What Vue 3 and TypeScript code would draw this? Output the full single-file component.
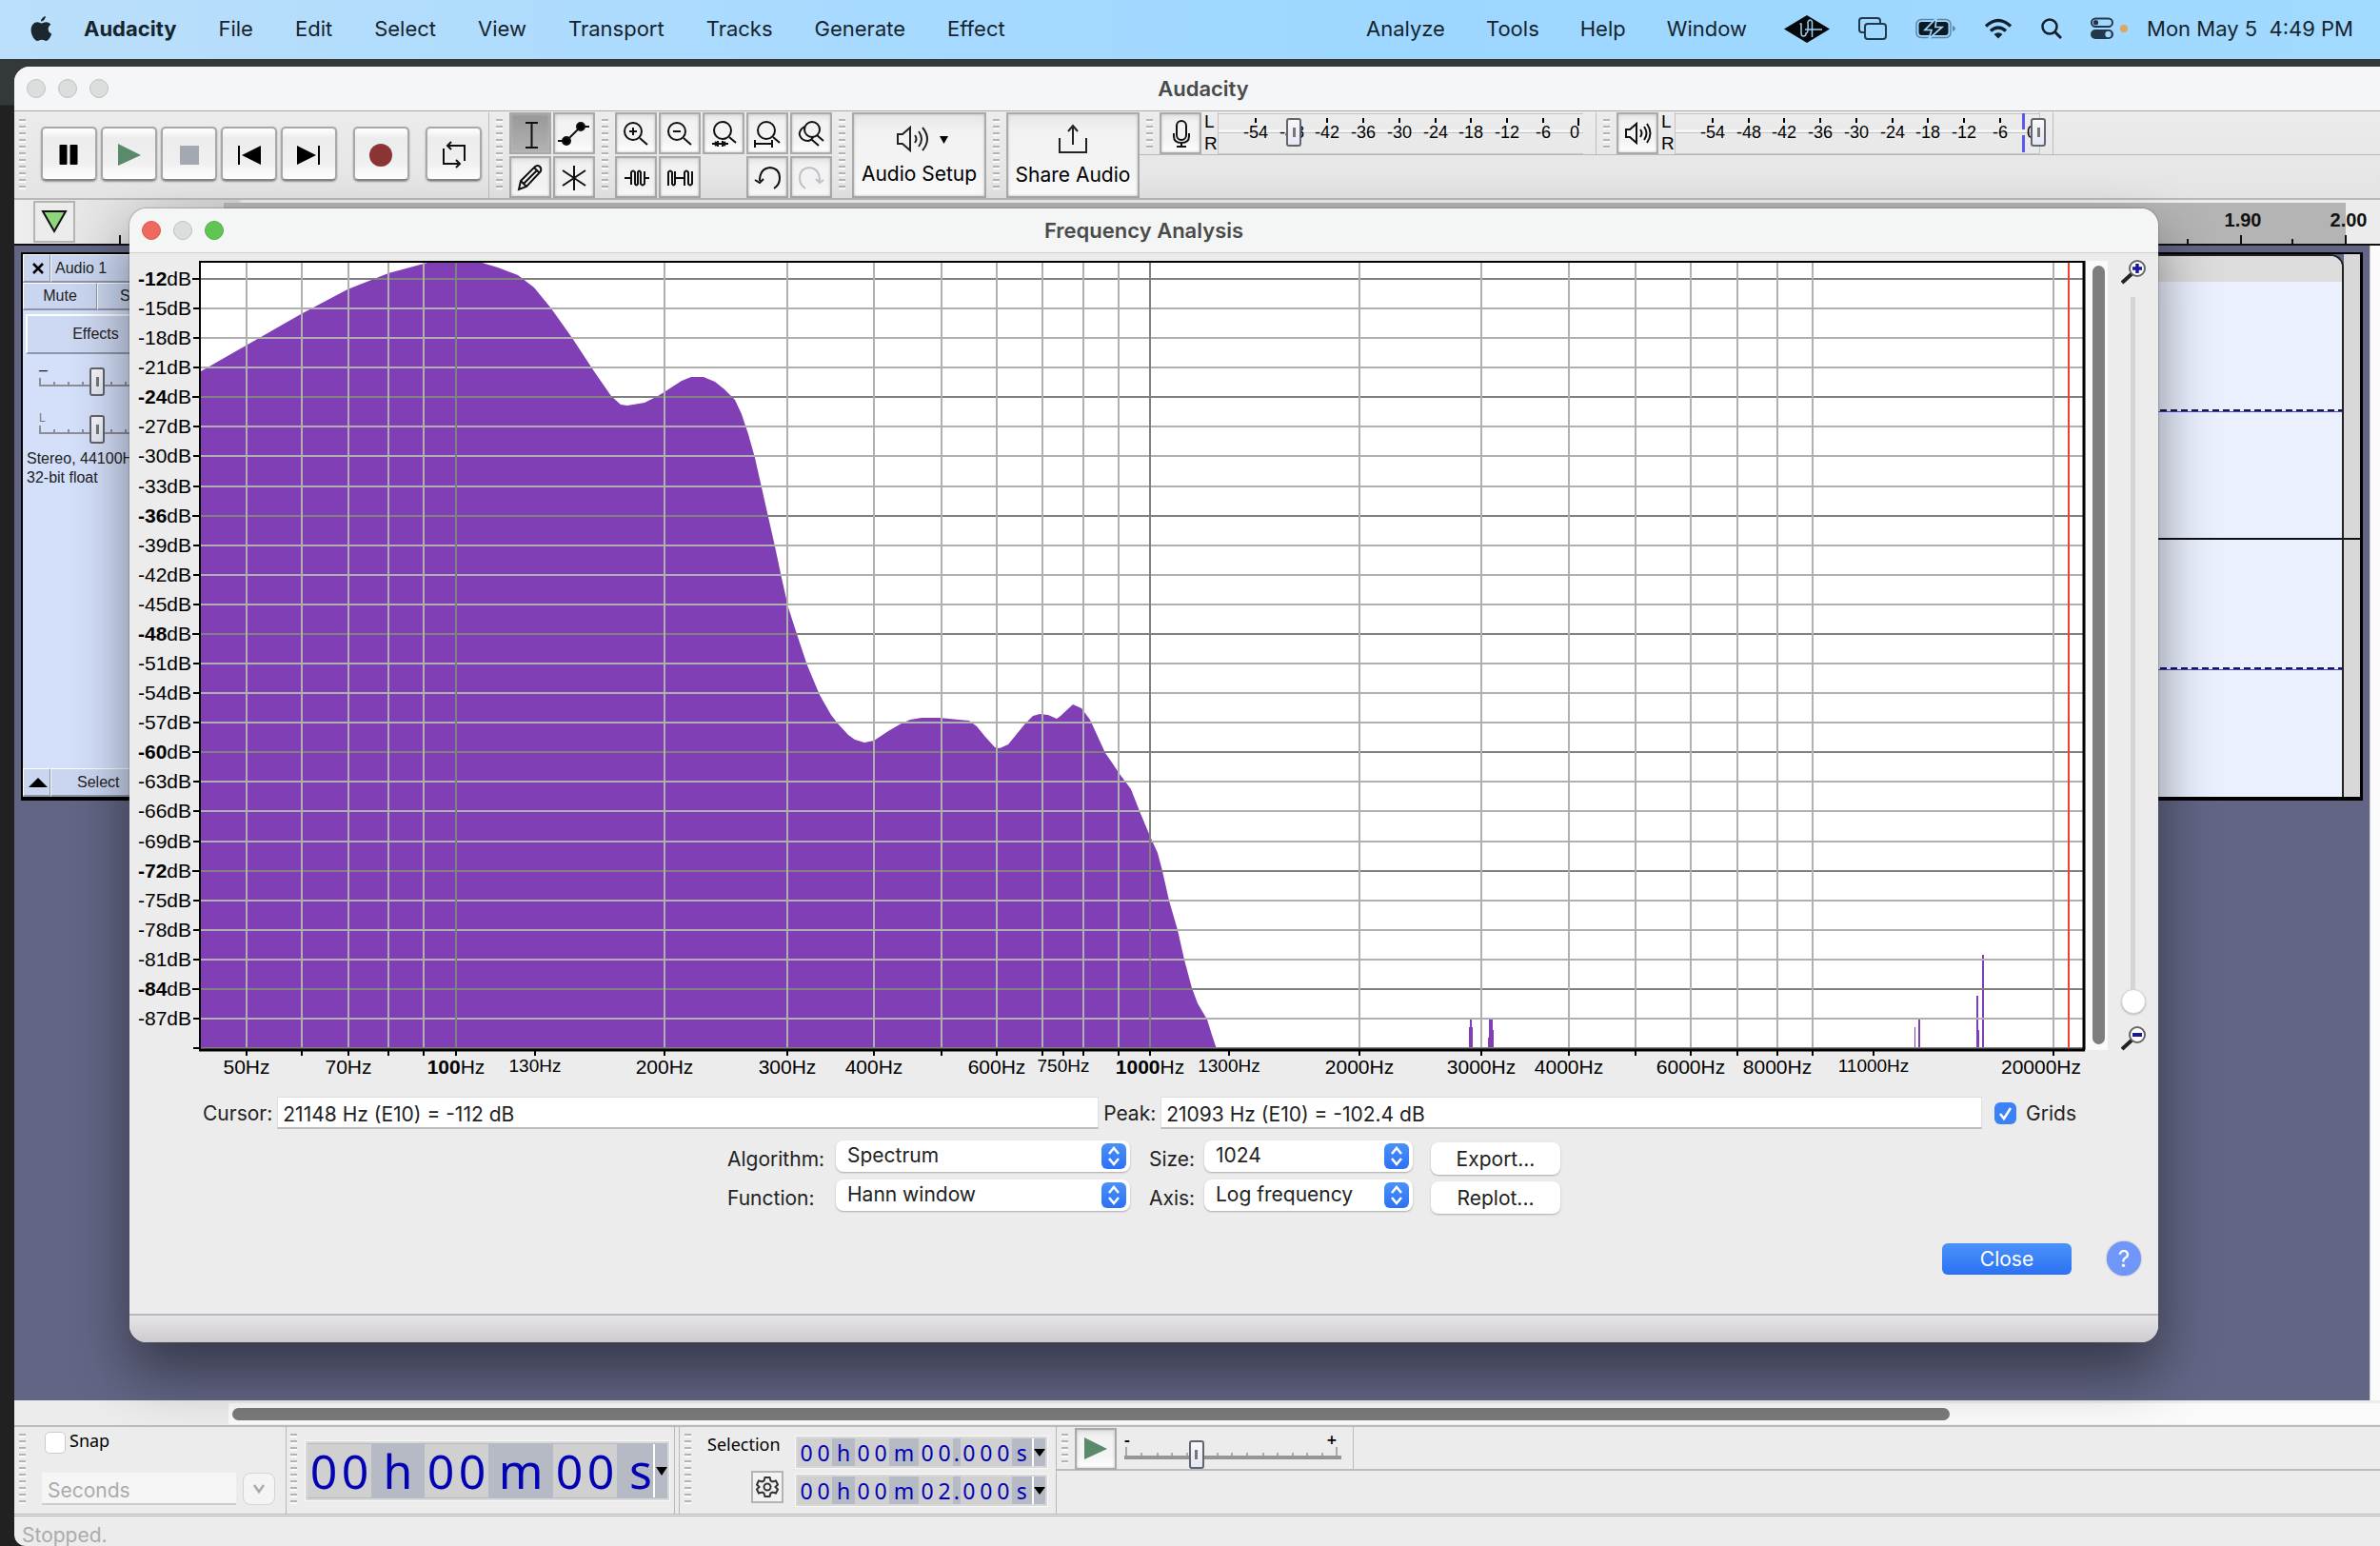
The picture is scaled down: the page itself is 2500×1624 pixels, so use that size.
<script setup lang="ts">
import { ref } from 'vue'

const leftMenus = ['File', 'Edit', 'Select', 'View', 'Transport', 'Tracks', 'Generate', 'Effect']
const rightMenus = ['Analyze', 'Tools', 'Help', 'Window']

const grids = ref(true)
const snap = ref(false)
const algorithm = ref('Spectrum')
const windowFn = ref('Hann window')
const size = ref('1024')
const axis = ref('Log frequency')

/* Meter scale */
const meterMarks = [-54, -48, -42, -36, -30, -24, -18, -12, -6].map((db, i) => ({
  db,
  x: 40 + Math.round(i * 37.7),
}))

/* Spectrum plot geometry */
const W = 1977
const H = 828
const minHz = 43.07
const decade = 729.5
const px = (hz: number) => Math.round(Math.log10(hz / minHz) * decade) + 1
const py = (db: number) => Math.round(18 + (-12 - db) * 10.36)

const dbRows = Array.from({ length: 26 }, (_, i) => {
  const db = -12 - i * 3
  return { db, y: py(db), major: db % 12 === 0 }
})

interface Tick { hz: number; label?: boolean; major?: boolean; minor?: boolean }
const hzTicks: Tick[] = [
  { hz: 50, label: true }, { hz: 60 }, { hz: 70, label: true }, { hz: 80 }, { hz: 90 },
  { hz: 100, label: true, major: true }, { hz: 130, label: true, minor: true },
  { hz: 200, label: true }, { hz: 300, label: true }, { hz: 400, label: true }, { hz: 500 },
  { hz: 600, label: true }, { hz: 700 }, { hz: 750, label: true, minor: true }, { hz: 800 }, { hz: 900 },
  { hz: 1000, label: true, major: true }, { hz: 1300, label: true, minor: true },
  { hz: 2000, label: true }, { hz: 3000, label: true }, { hz: 4000, label: true }, { hz: 5000 },
  { hz: 6000, label: true }, { hz: 7000 }, { hz: 8000, label: true }, { hz: 9000 },
  { hz: 11000, label: true, minor: true }, { hz: 20000, label: true },
]

const spectrum =
  '0,827 0,115 49,87 105,55 154,29 197,12 234,2 242,0 292,0 312,6 333,14 350,27 368,49 390,80 413,115 431,141 441,150 448,151 466,148 480,141 488,136 505,125 515,121 528,121 540,126 550,134 561,145 568,160 575,181 582,206 589,237 596,268 603,299 610,332 617,363 626,391 637,424 650,455 662,476 669,485 680,497 687,502 697,505 707,503 722,493 734,486 745,481 757,479 776,479 796,481 807,482 815,488 824,499 834,510 839,511 848,507 857,496 866,485 874,477 881,475 890,476 899,480 903,477 916,465 925,469 934,481 950,516 957,526 965,538 977,554 986,577 996,601 1005,621 1010,640 1017,671 1026,702 1033,733 1041,763 1047,779 1057,796 1062,812 1067,827'

const spikes = [
  { x: 1332, y: 804, w: 4 }, { x: 1333, y: 796, w: 2 },
  { x: 1352, y: 815, w: 3 }, { x: 1353, y: 796, w: 4 }, { x: 1356, y: 807, w: 2 },
  { x: 1800, y: 804, w: 1 }, { x: 1804, y: 796, w: 2 },
  { x: 1865, y: 771, w: 2 }, { x: 1867, y: 807, w: 1 }, { x: 1871, y: 728, w: 2 },
]

interface Cell { t: string; k: 'd' | 'u' }
const bigTime: Cell[] = [
  { t: '00', k: 'd' }, { t: 'h', k: 'u' }, { t: '00', k: 'd' }, { t: 'm', k: 'u' }, { t: '00', k: 'd' }, { t: 's', k: 'u' },
]
const selTimes = ['00', '02'].map((sec) => ({ sec, label: sec === '00' ? 'Selection start' : 'Selection end' }))
</script>

<template>
  <div class="desktop">
    <nav class="menubar">
      <svg class="apple" viewBox="0 0 22 26"><path d="M15.2 0c.2 2-1.700 5.200-4.600 5.300C10.300 3.200 12.600.5 15.200 0zM11 7.200c1 0 2.600-1.300 4.900-1.200 2 .1 3.600.9 4.600 2.400-3.900 2.500-3.200 7.900.9 9.500-.9 2.500-3 6.900-5.400 7.100-1.700.1-2.300-1.100-4.500-1.100s-2.900 1.100-4.500 1.100C4.300 25 1 19.500.6 15.300.1 10.200 2.900 6.200 6.700 6.100c1.800 0 3.200 1.100 4.300 1.100z" /></svg>
      <a href="#" class="app-name">Audacity</a>
      <a v-for="m in leftMenus" :key="m" href="#">{{ m }}</a>
      <div class="menu-right">
        <a v-for="m in rightMenus" :key="m" href="#">{{ m }}</a>
        <div class="status-icons">
          <svg width="48" height="29" viewBox="0 0 48 29"><path d="M24 0 48 14.500 24 29 0 14.500z" fill="#05080b" /><path d="M16.500 9h1.500v10q0 3 2.500 3t2.500-3q3 0 2-12 1-2 2.500-2t2 2v16M22 15h18" fill="none" stroke="#9dd0ee" stroke-width="1.500" /></svg>
          <svg width="30" height="24" viewBox="0 0 30 24" fill="none" stroke="#22384a" stroke-width="2"><path d="M6 16H4q-3 0-3-3V4q0-3 3-3h16q3 0 3 3v2" /><rect x="7" y="7" width="22" height="16" rx="3" /></svg>
          <svg width="42" height="22" viewBox="0 0 42 22"><rect x="1" y="1.500" width="36" height="19" rx="5" fill="none" stroke="#5c88a6" stroke-width="1.500" /><rect x="3.500" y="4" width="31" height="14" rx="3" fill="#0d1a24" /><path d="M39 8q3 1 3 3t-3 3z" fill="#5c88a6" /><path d="M22 0 10 12.500h7L14 22 28 9.500h-7z" fill="#0d1a24" stroke="#a0d8ff" stroke-width="1.700" /></svg>
          <svg width="30" height="22" viewBox="0 0 30 22" fill="none" stroke="#10202c" stroke-width="3.500"><path d="M2 8.500q13-12 26 0M7 13.500q8-7 16 0" /><path d="M15 21.500l-4.500-4.500q4.500-3.500 9 0z" fill="#10202c" stroke="none" /></svg>
          <svg width="22" height="22" viewBox="0 0 22 22" fill="none" stroke="#10202c" stroke-width="2.500"><circle cx="9" cy="9" r="7.500" /><path d="M14.500 14.500 21 21" stroke-width="3" /></svg>
          <svg width="40" height="24" viewBox="0 0 40 24"><rect x="1" y="1.500" width="22" height="8.500" rx="4.200" fill="none" stroke="#22384a" stroke-width="2" /><circle cx="5.500" cy="5.700" r="2.600" fill="#22384a" /><rect x="0" y="13" width="24" height="10" rx="5" fill="#22384a" /><circle cx="18.500" cy="18" r="3.200" fill="#a0d8ff" /><circle cx="35" cy="12" r="4" fill="#e0a45c" /></svg>
        </div>
        <span class="clock">Mon May 5&nbsp; 4:49 PM</span>
      </div>
    </nav>

    <main class="window">
      <header class="titlebar">
        <div class="lights"><i></i><i></i><i></i></div>
        <h1>Audacity</h1>
      </header>

      <section class="toolbar">
        <span class="grip"></span>
        <div class="transport">
          <button aria-label="Pause"><svg viewBox="0 0 59 57"><path d="M20.500 20h6v19h-6zM31.500 20h6v19h-6z" stroke="#000" stroke-width="2" stroke-linejoin="round" /></svg></button>
          <button aria-label="Play"><svg viewBox="0 0 59 57"><path d="M18 18 42 30 18 41z" fill="#588a6b" /></svg></button>
          <button aria-label="Stop"><svg viewBox="0 0 59 57"><path d="M20 20h20v20H20z" fill="#a4a8b0" /></svg></button>
          <button aria-label="Skip to start"><svg viewBox="0 0 59 57"><path d="M42 20v20L22 30zM18 20h2v20h-2z" /></svg></button>
          <button aria-label="Skip to end"><svg viewBox="0 0 59 57"><path d="M17 20v20L37 30zM39 20h2v20h-2z" /></svg></button>
          <button class="apart" aria-label="Record"><svg viewBox="0 0 59 57"><circle cx="29" cy="30" r="12" fill="#8a3434" /></svg></button>
          <button class="apart" aria-label="Loop"><svg viewBox="0 0 59 57" fill="none" stroke="#111" stroke-width="2"><path d="M19 23v16h16M41 36V20H23M27 16l-4 4 4 4M32 35l4 4-4 4" /></svg></button>
        </div>
        <span class="vline"></span>
        <span class="grip"></span>
        <div class="grid2 two">
          <button class="on" aria-label="Selection tool"><svg viewBox="0 0 44 44"><path d="M17 11h13M17 37h13M23.500 11v26" /></svg></button>
          <button aria-label="Envelope tool"><svg viewBox="0 0 44 44"><path d="M5 30h9L29 15h9" /><circle cx="14" cy="30" r="4" fill="#000" /><circle cx="29" cy="15" r="4" fill="#000" /></svg></button>
          <button aria-label="Draw tool"><svg viewBox="0 0 44 44"><path d="M10 35l2-9 15-15q3-2 5 0t1 5L18 32zM12 26l6 6M26 12l6 6M15 29 29 15" /></svg></button>
          <button aria-label="Multi-tool"><svg viewBox="0 0 44 44"><path d="M22 10v26M10 15l24 16M34 15 10 31" /></svg></button>
        </div>
        <span class="grip"></span>
        <div class="grid2 five">
          <button aria-label="Zoom in"><svg viewBox="0 0 44 44"><circle cx="19" cy="20" r="9" /><path d="M26 27l8 7M15 20h8M19 16v8" /></svg></button>
          <button aria-label="Zoom out"><svg viewBox="0 0 44 44"><circle cx="19" cy="20" r="9" /><path d="M26 27l8 7M15 20h8" /></svg></button>
          <button aria-label="Fit selection"><svg viewBox="0 0 44 44"><circle cx="21" cy="19" r="9" /><path d="M28 26l7 6M10 33h17M16 30v6M21 30v6M13 31l3 2-3 2M24 31l-3 2 3 2" /></svg></button>
          <button aria-label="Fit project"><svg viewBox="0 0 44 44"><circle cx="21" cy="19" r="9" /><path d="M28 26l7 6M9 33h18M9 29v8M27 29v8" /></svg></button>
          <button aria-label="Zoom toggle"><svg viewBox="0 0 44 44"><circle cx="23" cy="18" r="8" /><path d="M28 24l7 6M15 15q-6 4-5 9 2 6 9 6 4-1 5-4M23 29l7 6" /></svg></button>
          <button aria-label="Trim"><svg viewBox="0 0 44 44"><path d="M10 23h7v7M36 23h-5M17 30V17q2-3 4 0v12q1.500 3 3 0V17q1.500-3 3 0v12q2 3 4 0V16" /></svg></button>
          <button aria-label="Silence"><svg viewBox="0 0 44 44"><path d="M10 31V17q2-3 4 0v12q1.500 3 3 0V16M17 23h10M27 31V17q2-3 4 0v12q2 3 4 0V16" /></svg></button>
          <span></span>
          <button aria-label="Undo"><svg viewBox="0 0 44 44"><path d="M14 26q0-13 11-14 10 1 10 11 0 7-6 11M9 25l5 3 4-4" /></svg></button>
          <button aria-label="Redo" disabled><svg viewBox="0 0 44 44" class="dim"><path d="M31 26q0-13-11-14-10 1-10 11 0 7 6 11M35 25l-4 3-4-4" /></svg></button>
        </div>
        <span class="grip"></span>
        <button class="big setup">
          <svg width="60" height="32" viewBox="0 0 60 32"><g fill="none" stroke="#222" stroke-width="2"><path d="M7 11h5l8-7v24l-8-7H7zM25 12q3 4 0 8M29 8q6 8 0 16M33 4q10 12 0 24" /></g><path d="M51 13h9l-4.500 8z" /></svg>
          <span>Audio Setup</span>
        </button>
        <span class="grip"></span>
        <button class="big share">
          <svg width="32" height="32" viewBox="0 0 32 32" fill="none" stroke="#222" stroke-width="2"><path d="M2 15v15h28V15M16 22V3M11 8l5-6 5 6" /></svg>
          <span>Share Audio</span>
        </button>
        <div class="meters">
          <span class="grip short"></span>
          <button class="sq" aria-label="Record meter"><svg viewBox="0 0 44 44"><rect x="18" y="9" width="10" height="20" rx="5" /><path d="M15 22v3q0 7 8 7t8-7v-3M23 32v4M18 36h10" /></svg></button>
          <span class="lr"><b>L</b><b>R</b></span>
          <div class="meter">
            <svg width="384" height="44"><path class="edge" d="M0.500 0V44M0 1.500h384M0 21.500h384M0 43.500h384" /><path d="M1 19.500h382" stroke="#fafafa" stroke-width="2" /><g v-for="m in meterMarks" :key="m.db"><line :x1="m.x" :x2="m.x" y1="6" y2="11" /><text :x="m.x" y="27">{{ m.db }}</text></g><line x1="379" x2="379" y1="6" y2="14" /><text x="375" y="27">0</text></svg>
            <input type="range" aria-label="Recording volume" min="0" max="376" value="72" />
          </div>
          <span class="vline push"></span>
          <span class="grip short"></span>
          <button class="sq" aria-label="Playback meter"><svg viewBox="0 0 44 44"><path d="M10 18h4l7-6v20l-7-6h-4zM25 18q3 4 0 8M29 15q5 7 0 14M32 12q7 10 0 20" /></svg></button>
          <span class="lr"><b>L</b><b>R</b></span>
          <div class="meter">
            <svg width="384" height="44"><path class="edge" d="M0.500 0V44M0 1.500h384M0 21.500h384M0 43.500h384M383.500 0V44" /><path d="M1 19.500h382" stroke="#fafafa" stroke-width="2" /><g v-for="m in meterMarks" :key="m.db"><line :x1="m.x" :x2="m.x" y1="6" y2="11" /><text :x="m.x" y="27">{{ m.db }}</text></g><text x="375" y="27">0</text><path d="M366.500 1v17M366.500 24v18" stroke="#5a5af0" stroke-width="3" /></svg>
            <input type="range" aria-label="Playback volume" min="0" max="376" value="374" />
          </div>
          <span class="vline push"></span>
        </div>
      </section>

      <section class="ruler">
        <button aria-label="Timeline options"><svg width="28" height="26" viewBox="0 0 28 26"><path d="M2 2h24L14 23z" fill="#8fd67a" stroke="#111" stroke-width="2" /></svg></button>
        <span class="tick"></span>
        <div class="range"></div>
        <svg class="scale" width="240" height="47"><path d="M38 41v6M94 37v10M148 41v6M204 37v10" stroke="#111" stroke-width="2" /><text x="96" y="28">1.90</text><text x="207" y="28">2.00</text></svg>
      </section>

      <section class="tracks">
        <div class="track">
          <aside class="panel">
            <div class="row"><button class="cell x" aria-label="Close track"><svg width="12" height="12" viewBox="0 0 12 12"><path d="M1 1l10 10M11 1 1 11" stroke="#000" stroke-width="2.500" /></svg></button><button class="cell name">Audio 1</button></div>
            <div class="row"><button class="cell half">Mute</button><button class="cell half">Solo</button></div>
            <button class="fx">Effects</button>
            <div class="slide">
              <span>–</span>
              <svg width="122" height="9"><path d="M1 0v8M16 4v4M31 4v4M46 4v4M61 4v4M76 4v4M91 4v4M106 4v4M121 0v8M0 8h122" stroke="#8d8d96" stroke-width="2" /></svg>
              <input type="range" aria-label="Gain" />
            </div>
            <div class="slide">
              <span class="pan">L</span>
              <svg width="122" height="9"><path d="M1 0v8M16 4v4M31 4v4M46 4v4M61 4v4M76 4v4M91 4v4M106 4v4M121 0v8M0 8h122" stroke="#8d8d96" stroke-width="2" /></svg>
              <input type="range" aria-label="Pan" />
            </div>
            <p>Stereo, 44100Hz<br />32-bit float</p>
            <div class="row foot"><button class="cell x" aria-label="Collapse"><svg width="20" height="10"><path d="M0 10 10 0l10 10z" /></svg></button><button class="cell sel">Select</button></div>
          </aside>
          <div class="clip">
            <div class="clip-head"></div>
            <div class="wave"></div>
            <div class="wave second"></div>
          </div>
          <div class="after"></div>
        </div>
        <div class="vscroll"></div>
      </section>

      <div class="hscroll"><div class="lane"><i></i></div></div>

      <section class="bottom">
        <div class="snap">
          <span class="grip"></span>
          <div class="snap-body">
            <label><input v-model="snap" type="checkbox" />Snap</label>
            <div class="combo"><input type="text" aria-label="Snap to" value="Seconds" disabled /><button disabled aria-label="Snap options"><svg width="14" height="12" fill="none" stroke="#aaa" stroke-width="2.500"><path d="M2 2l5 7 5-7" /></svg></button></div>
          </div>
        </div>
        <div class="position">
          <span class="grip"></span>
          <div class="time large">
            <span v-for="(c, i) in bigTime" :key="i" :class="c.k"><b v-for="(ch, j) in c.t" :key="j">{{ ch }}</b></span>
            <button aria-label="Time format"><svg width="12" height="9"><path d="M0 0h12L6 9z" /></svg></button>
          </div>
        </div>
        <div class="selection">
          <span class="grip"></span>
          <div class="sel-label"><span>Selection</span><button aria-label="Selection settings"><svg width="24" height="24" viewBox="0 0 24 24" fill="none" stroke="#333" stroke-width="2"><circle cx="12" cy="12" r="3.500" /><path d="M9.500 2h5l1 3.500 2 1L21 5.500l2 4-2.500 2.500L23 14.500l-2 4-3.500-1-2 1-1 3.500h-5l-1-3.500-2-1-3.500 1-2-4L3.500 12 1 9.500l2-4 3.500 1 2-1z" /></svg></button></div>
          <div class="times">
            <div v-for="s in selTimes" :key="s.sec" class="time small" :aria-label="s.label">
              <span class="d"><b>0</b><b>0</b></span><span class="u"><b>h</b></span><span class="d"><b>0</b><b>0</b></span><span class="u wide"><b>m</b></span><span class="d"><b v-for="(ch, j) in s.sec" :key="j">{{ ch }}</b></span><span class="u dot"><b>.</b></span><span class="d"><b>0</b><b>0</b><b>0</b></span><span class="u last"><b>s</b></span>
              <button aria-label="Time format"><svg width="12" height="8"><path d="M0 0h12L6 8z" /></svg></button>
            </div>
          </div>
        </div>
        <div class="speed">
          <span class="grip short"></span>
          <button class="sq" aria-label="Play at speed"><svg viewBox="0 0 44 44"><path d="M10 10l24 12L10 33z" fill="#588a6b" stroke="none" /></svg></button>
          <div class="speed-slide">
            <div><span>-</span><span>+</span></div>
            <svg width="228" height="13"><path d="M2 0v10M18 6v4M35 6v4M50 6v4M66 6v4M82 6v4M98 6v4M113 6v4M129 6v4M146 6v4M161 6v4M177 6v4M192 6v4M208 6v4M223 0v10" stroke="#aaa" stroke-width="2" /><path d="M0 11h228" stroke="#969696" stroke-width="4" /></svg>
            <input type="range" aria-label="Playback speed" min="0" max="212" value="68" />
          </div>
          <span class="vline"></span>
        </div>
      </section>
      <footer class="status">Stopped.</footer>
    </main>

    <section class="dialog" role="dialog" aria-label="Frequency Analysis">
      <header class="titlebar">
        <div class="lights live"><i></i><i></i><i></i></div>
        <h2>Frequency Analysis</h2>
      </header>
      <div class="plot-row">
        <svg class="plot" viewBox="-71 -2 2051 860">
          <rect x="0" y="0" :width="W" :height="H" fill="#fff" />
          <polygon :points="spectrum" fill="#803fb5" />
          <rect v-for="(s, i) in spikes" :key="i" :x="s.x" :y="s.y" :width="s.w" :height="H - s.y" fill="#803fb5" />
          <template v-if="grids">
            <rect v-for="r in dbRows" :key="r.db" x="0" :y="r.y - 1" :width="W" height="2" :fill="r.major ? '#808080' : '#b0b0b0'" />
            <template v-for="t in hzTicks" :key="t.hz">
              <rect v-if="!t.minor" :x="px(t.hz) - 1" y="0" width="2" :height="H" :fill="t.major ? '#808080' : '#b0b0b0'" />
            </template>
          </template>
          <rect x="0" y="825" :width="W" height="2" fill="#808080" />
          <rect x="1961" y="0" width="2" :height="H" fill="#f04030" />
          <path :d="`M-1 0V${H}M-2 0H${W + 1}`" stroke="#000" stroke-width="2" />
          <path :d="`M${W + 1} -1V${H}M-2 ${H}H${W + 2}`" stroke="#000" stroke-width="3" />
          <g v-for="r in dbRows" :key="'l' + r.db">
            <rect :x="r.major ? -9 : -8" :y="r.y - 1" :width="r.major ? 8 : 6" height="2" />
            <text x="-10" :y="r.y + 7" text-anchor="end"><tspan :class="{ bold: r.major }">{{ r.db }}</tspan>dB</text>
          </g>
          <rect x="-8" y="825" width="6" height="2" />
          <g v-for="t in hzTicks" :key="'h' + t.hz">
            <rect :x="px(t.hz) - 1" :y="H" width="2" height="6" />
            <text v-if="t.label" :x="px(t.hz) - (t.hz === 20000 ? 13 : 0)" :y="t.minor ? 851 : 853" :class="{ minor: t.minor }" text-anchor="middle"><tspan :class="{ bold: t.major }">{{ t.hz }}</tspan>Hz</text>
          </g>
        </svg>
        <div class="vbar"><i></i></div>
        <div class="zoomer">
          <svg width="26" height="26" viewBox="0 0 26 26"><path d="M1 24 12 14" stroke="#222" stroke-width="4" /><circle cx="17" cy="9" r="8" fill="#fff" stroke="#666" stroke-width="2" /><path d="M12 9h10M17 4v10" stroke="#1a1a9a" stroke-width="3.500" /></svg>
          <input type="range" aria-label="Vertical zoom" value="0" />
          <svg width="26" height="26" viewBox="0 0 26 26"><path d="M1 24 12 14" stroke="#222" stroke-width="4" /><circle cx="17" cy="9" r="8" fill="#fff" stroke="#666" stroke-width="2" /><path d="M12 9h10" stroke="#1a1a9a" stroke-width="4" /></svg>
        </div>
      </div>
      <div class="readout">
        <label for="cursor">Cursor:</label><input id="cursor" type="text" readonly value="21148 Hz (E10) = -112 dB" />
        <label for="peak">Peak:</label><input id="peak" type="text" readonly value="21093 Hz (E10) = -102.4 dB" />
        <label class="check"><input v-model="grids" type="checkbox" />Grids</label>
      </div>
      <div class="options">
        <label for="alg">Algorithm:</label>
        <span class="pick"><select id="alg" v-model="algorithm"><option>Spectrum</option></select><svg viewBox="0 0 26 27"><path d="M8 11l5-6 5 6M8 16l5 6 5-6" /></svg></span>
        <label for="size" class="mid">Size:</label>
        <span class="pick"><select id="size" v-model="size"><option>1024</option></select><svg viewBox="0 0 26 27"><path d="M8 11l5-6 5 6M8 16l5 6 5-6" /></svg></span>
        <button>Export...</button>
        <label for="fn">Function:</label>
        <span class="pick"><select id="fn" v-model="windowFn"><option>Hann window</option></select><svg viewBox="0 0 26 27"><path d="M8 11l5-6 5 6M8 16l5 6 5-6" /></svg></span>
        <label for="axis" class="mid">Axis:</label>
        <span class="pick"><select id="axis" v-model="axis"><option>Log frequency</option></select><svg viewBox="0 0 26 27"><path d="M8 11l5-6 5 6M8 16l5 6 5-6" /></svg></span>
        <button>Replot...</button>
      </div>
      <div class="actions">
        <button class="close">Close</button>
        <button class="help">?</button>
      </div>
      <div class="dialog-foot"></div>
    </section>
  </div>
</template>

<style>
body { margin: 0; background: #222; }
</style>

<style scoped>
* { box-sizing: border-box; }
.desktop { position: relative; min-height: 100vh; display: flex; flex-direction: column; overflow: hidden; background: linear-gradient(#333838 62px, #333838 110px, #212121 111px); font-family: Inter, sans-serif; font-size: 21px; color: #222; }
button, input, select { font: inherit; color: inherit; margin: 0; padding: 0; border: 0; border-radius: 0; }
button { display: block; }
svg { display: block; flex: none; }
h1, h2, p { margin: 0; }

.menubar { height: 62px; display: flex; align-items: center; gap: 44px; padding: 0 28px 2px 32px; background: linear-gradient(90deg, #bbdffa, #a8daff 35%, #9dd7ff 60%, #a2d9ff); font-size: 22px; white-space: nowrap; }
.menubar a { color: #15242e; text-decoration: none; }
.apple { width: 23px; height: 27px; fill: #1b262e; }
.menubar .app-name { font-weight: 700; margin-left: -11px; }
.menu-right { margin-left: auto; display: flex; align-items: center; gap: 43px; }
.status-icons { display: flex; align-items: center; gap: 30px; margin-left: -4px; }
.clock { margin-left: -24px; color: #15242e; }

.window { flex: 1; display: flex; flex-direction: column; margin: 8px 0 0 15px; background: #ececec; border-radius: 16px 0 0 12px; overflow: hidden; }
.titlebar { height: 47px; display: grid; grid-template-columns: 1fr auto 1fr; align-items: center; background: #f4f6f8; border-bottom: 1px solid #a9a9a9; padding: 0 13px; flex: none; }
.titlebar h1, .titlebar h2 { font-size: 22px; line-height: 26px; font-weight: 600; color: #4a4a4a; }
.window > .titlebar { padding-right: 0; }
.lights { display: flex; gap: 13px; }
.lights i { width: 20px; height: 20px; border-radius: 50%; background: #dcdddd; border: 1px solid #bfc0c0; }
.lights.live i:first-child { background: #ee6a5f; border-color: #d5574c; }
.lights.live i:last-child { background: #61c554; border-color: #50ab44; }

.toolbar { height: 93px; flex: none; display: flex; align-items: flex-start; padding-top: 1px; background: linear-gradient(#ececec, #e4e4e4); border-bottom: 2px solid #b8b8b8; }
.grip { width: 7px; height: 76px; margin: 7px 7px 0; flex: none; background: repeating-linear-gradient(#b4b4b4 0 2px, #fafafa 2px 4px, transparent 4px 7px); }
.grip.short { height: 31px; }
.toolbar > .grip:first-child { margin: 7px 16px 0 5px; }
.vline { width: 1px; align-self: stretch; background: #bdbdbd; flex: none; }
.transport { display: flex; gap: 4px; padding: 15px 7px 0 0; }
.transport button { width: 59px; height: 57px; border-radius: 5px; border: 2px solid #a8a8a8; border-bottom-color: #848484; background: linear-gradient(#fff, #ececec 20%, #f0f0f0 70%, #fff); box-shadow: 0 1px 2px #999; }
.transport svg { width: 59px; height: 57px; margin: -3px -2px; }
.transport .apart { margin-left: 13px; }
.grid2 { display: grid; gap: 2px; }
.grid2.two { grid-template-columns: 44px 44px; }
.grid2.five { grid-template-columns: repeat(5, 44px); }
.grid2 button, .sq, .big { background: linear-gradient(#e6e6e6, #f2f2f2 20%, #f4f4f4 70%, #fff); border: 2px solid #aaa; box-shadow: inset 0 0 3px #bbb; }
.grid2 button, .sq { width: 44px; height: 44px; flex: none; }
.grid2 svg, .sq svg { width: 44px; height: 44px; margin: -2px; fill: none; stroke: #111; stroke-width: 2; }
.grid2 svg.dim { stroke: #bfc2c8; }
.grid2 .on { background: linear-gradient(#989898, #b2b2b2); border-color: #a8a8a8; }
.big { height: 90px; display: flex; flex-direction: column; align-items: center; color: #000; white-space: nowrap; }
.setup { width: 141px; padding-top: 10px; gap: 10px; }
.share { width: 140px; padding-top: 10px; gap: 11px; }
.big span { line-height: 22px; }
.meters { flex: 1; height: 45px; display: flex; border-bottom: 1px solid #b8b8b8; }
.lr { width: 17px; display: flex; flex-direction: column; font: 19px/23px "Liberation Sans", sans-serif; color: #000; padding-left: 3px; margin-top: -2px; }
.lr b { font-weight: 400; }
.meter { position: relative; width: 384px; flex: none; }
.meter text { font: 18px "Liberation Sans", sans-serif; text-anchor: middle; fill: #000; }
.meter line { stroke: #000; stroke-width: 2; }
.meter .edge { stroke: #c4c4c4; fill: none; }
.push { margin-left: 13px; }
input[type="range"] { appearance: none; background: transparent; cursor: default; }
input[type="range"]::-webkit-slider-thumb { appearance: none; width: 16px; height: 30px; border: 2px solid #62666c; border-radius: 3px; background: linear-gradient(#777, #777) center / 3px 10px no-repeat, linear-gradient(#f8f8fc, #e4e8f4); }
.meter input { position: absolute; left: 0; top: 6px; width: 392px; height: 30px; }

.ruler { position: relative; height: 48px; flex: none; display: flex; background: linear-gradient(90deg, #eee, #d4d4d4 235px, #ececec 240px); border-bottom: 2px solid #111; }
.ruler button { width: 44px; height: 44px; margin: 1px 0 0 20px; display: grid; place-items: center; background: #ececec; border: 2px solid #b4b4b4; }
.ruler .tick { width: 2px; height: 9px; background: #111; align-self: flex-end; margin-left: 46px; }
.range { flex: 1; margin: 3px 36px 0 108px; background: #b4b4b4; }
.scale { position: absolute; right: 0; top: 0; }
.scale text { font: bold 20px "Liberation Sans", sans-serif; text-anchor: middle; fill: #111; }

.tracks { flex: 1; display: flex; align-items: flex-start; background: #626584; padding-left: 7px; }
.track { flex: 1; margin: 7px 7px 0 0; height: 576px; display: flex; border: solid #000; border-width: 2px 3px 4px 2px; }
.vscroll { width: 11px; align-self: stretch; background: #fbfbfb; border-left: 1px solid #ccc; }
.panel { width: 210px; flex: none; display: flex; flex-direction: column; background: #d4dffa; font: 16px/20px "Liberation Sans", sans-serif; color: #222; }
.row { display: flex; height: 30px; flex: none; }
.cell { background: #cad6f0; border: 1px solid #fff; border-right-color: #8d95a8; border-bottom: 2px solid #8d95a8; }
.cell.x { width: 29px; display: grid; place-items: center; padding-left: 2px; }
.cell.name { flex: 1; text-align: left; padding-left: 4px; }
.cell.half { width: 78px; height: 29px; }
.cell.half + .half { flex: 1; padding-right: 52px; }
.cell.sel { flex: 1; text-align: left; padding-left: 27px; }
.fx { height: 42px; margin: 3px 8px 2px 3px; padding-right: 52px; background: #cdd8f2; border: 2px solid #fff; border-right-color: #8d95a8; border-bottom-color: #8d95a8; }
.slide { position: relative; height: 50px; margin-left: 17px; padding-top: 10px; flex: none; }
.slide + .slide { height: 48px; }
.slide span { display: block; height: 13px; line-height: 10px; color: #222; }
.slide .pan { font-size: 12px; color: #777; }
.slide input { position: absolute; left: 0; top: 12px; width: 122px; height: 30px; }
.panel p { padding: 0 0 0 4px; white-space: nowrap; width: 130px; }
.foot { margin-top: auto; }
.clip { flex: 1; display: flex; flex-direction: column; background: #ebf0ff; border-right: 2px solid #222; border-top-right-radius: 14px; overflow: hidden; border-top: 2px solid #222; }
.clip-head { height: 27px; background: #dcdcdc; }
.wave { flex: 0 0 271px; border-bottom: 2px solid #111; background: repeating-linear-gradient(90deg, #17174c 0 7px, #ebf0ff 7px 11px) 0 134px / 100% 2px no-repeat, linear-gradient(#4444d8, #4444d8) 0 136px / 100% 1px no-repeat; }
.wave.second { flex: 1; border: 0; }
.after { width: 17px; background: linear-gradient(#111, #111) 0 298px / 100% 2px no-repeat, #d8d8d8; }

.hscroll { height: 28px; flex: none; border-bottom: 2px solid #bcbcbc; padding: 3px 0 1px 225px; background: #ececec; }
.lane { height: 22px; background: #fafafa; padding: 5px 20% 0 4px; }
.lane i { display: block; height: 13px; border-radius: 7px; background: #7a7a7a; }

.bottom { height: 94px; flex: none; display: flex; border-bottom: 3px double #b4b4b4; font-family: "Noto Sans", sans-serif; font-size: 18px; color: #000; }
.snap, .position, .selection { display: flex; border-right: 1px solid #b8b8b8; }
.snap .grip { margin-left: 5px; margin-right: 17px; }
.snap-body { width: 256px; padding-top: 5px; }
.snap label { display: flex; gap: 4px; height: 23px; line-height: 18px; padding-left: 3px; }
.snap input[type="checkbox"] { appearance: none; width: 22px; height: 23px; background: #fff; border: 1px solid #ccc; border-radius: 5px; }
.combo { display: flex; gap: 7px; margin-top: 20px; font: 21px Inter, sans-serif; }
.combo input { width: 204px; height: 34px; padding: 4px 6px 0; background: #f5f5f5; border-bottom: 2px solid #ccc; color: #ababab; }
.combo button { width: 34px; height: 34px; display: grid; place-items: center; background: #f4f4f4; border: 1px solid #d4d4d4; border-radius: 8px; }
.position .grip { margin-left: 4px; }
.time { display: flex; background: #b6bac4; border: 2px solid #d8d8d8; outline: 1px solid #f8f8f8; color: #0202b4; }
.time b { font-weight: 400; text-align: center; }
.time span { display: flex; justify-content: center; align-items: center; }
.time .d { background: #d0d0d0; }
.time button { display: grid; place-items: center; background: #b6bac4; border-left: 2px solid #fff; margin-left: auto; }
.time.large { width: 382px; height: 62px; margin: 15px 5px 0 2px; font-size: 50px; line-height: 58px; padding: 1px 0; }
.large .d { width: 67px; }
.large .d b { width: 33px; }
.large .u { width: 56px; }
.large .u:nth-of-type(4) { width: 68px; }
.large .u:nth-of-type(6) { width: 38px; padding-left: 12px; }
.large button { width: 15px; }
.selection .grip { margin-left: 5px; }
.selection { border-left: 1px solid #b8b8b8; margin-left: 4px; }
.sel-label { width: 90px; display: flex; flex-direction: column; padding: 7px 0 0 10px; }
.sel-label span { line-height: 22px; }
.sel-label button { width: 34px; height: 34px; margin: 17px 0 0 46px; display: grid; place-items: center; background: #f2f2f2; border: 2px solid #b4b4b4; }
.times { display: flex; flex-direction: column; gap: 7px; padding: 10px 9px 0 13px; }
.time.small { width: 264px; height: 33px; font-size: 23px; line-height: 34px; }
.small .d b { width: 18px; }
.small .u { width: 25px; }
.small .u.wide { width: 32px; }
.small .u.dot { width: 8px; }
.small .u.last { width: 22px; }
.small button { width: 14px; }
.speed { flex: 1; height: 46px; display: flex; border-bottom: 2px solid #bcbcbc; }
.speed .grip { margin-left: 5px; }
.speed .sq { margin-top: 1px; }
.speed-slide { position: relative; width: 228px; margin: 4px 12px 0 8px; }
.speed-slide div { display: flex; justify-content: space-between; line-height: 18px; padding-right: 5px; font-weight: 600; }
.speed-slide svg { margin-top: -1px; }
.speed-slide input { position: absolute; left: 0; top: 10px; width: 228px; height: 30px; }
.status { height: 31px; padding: 7px 8px; line-height: 26px; color: #ababab; flex: none; }

.dialog { position: absolute; left: 136px; right: 233px; top: 219px; background: #ececec; border-radius: 18px; overflow: hidden; box-shadow: 0 0 2px #555, 0 30px 60px rgba(0, 0, 0, 0.45); }
.dialog .titlebar { background: #f4f6f5; border-color: #cfcfcf; }
.plot-row { display: flex; padding: 7px 0 0 4px; }
.plot { flex: 1; min-width: 0; font: 21px "Liberation Sans", sans-serif; }
.plot .bold { font-weight: 700; }
.plot .minor { font-size: 19px; }
.vbar { width: 23px; margin: 1px 0 30px; padding: 5px 3px 6px 7px; background: #fafafa; }
.vbar i { display: block; height: 100%; border-radius: 7px; background: #7e7e7e; }
.zoomer { width: 53px; display: flex; flex-direction: column; align-items: center; margin: 0 0 29px; gap: 13px; }
.zoomer input { flex: 1; width: 26px; writing-mode: vertical-lr; direction: rtl; background: linear-gradient(#d4d4d4, #d4d4d4) center / 5px 100% no-repeat; }
.zoomer input::-webkit-slider-thumb { width: 26px; height: 26px; border-radius: 50%; border: 1px solid #d0d0d0; background: #fff; box-shadow: 0 1px 2px #bbb; }

.readout { display: flex; align-items: center; margin: 19px 86px 0 77px; white-space: nowrap; }
.readout input[type="text"] { flex: 1; min-width: 0; height: 34px; margin: 0 5px; padding: 4px 5px 0; background: #fff; border: 1px solid #dedede; border-bottom: 2px solid #bdbdbd; }
.check { display: flex; align-items: center; gap: 10px; margin-left: 8px; }
.check input { appearance: none; width: 23px; height: 23px; border-radius: 6px; background: #fff; }
.check input:checked { background: url("data:image/svg+xml,%3Csvg xmlns='http://www.w3.org/2000/svg' viewBox='0 0 23 23'%3E%3Cpath d='M6 12l4 5 7-11' fill='none' stroke='white' stroke-width='2.500'/%3E%3C/svg%3E"), #3b82f7; }
.options { display: grid; grid-template-columns: 114px 309px 78px 219px 155px; row-gap: 8px; justify-content: center; margin-top: 12px; }
.options label { line-height: 40px; height: 33px; }
.options .mid { padding-left: 20px; }
.pick { position: relative; }
.pick select { appearance: none; width: 100%; height: 33px; padding: 0 12px 2px; background: #fff; border-radius: 8px; box-shadow: 0 1px 2px #aaa; }
.pick svg { position: absolute; right: 4px; top: 3px; width: 26px; height: 27px; border-radius: 6px; background: linear-gradient(#4a92f8, #2c71f5); fill: none; stroke: #fff; stroke-width: 2.500; pointer-events: none; }
.options button { width: 136px; height: 34px; margin: 2px 0 -3px 19px; background: #fff; border-radius: 8px; box-shadow: 0 1px 2px #aaa; }
.actions { display: flex; justify-content: flex-end; align-items: center; gap: 37px; padding: 32px 18px 40px 0; }
.close { width: 136px; height: 33px; border-radius: 6px; background: linear-gradient(#4a92f8, #2c71f5); color: #fff; }
.help { width: 36px; height: 36px; border-radius: 50%; background: #6f96f8; color: #fff; font-size: 24px; box-shadow: 0 0 2px #999; }
.dialog-foot { height: 30px; border-top: 2px solid #b9b9bb; background: linear-gradient(#e6e4e6, #cdcbce); }
</style>
